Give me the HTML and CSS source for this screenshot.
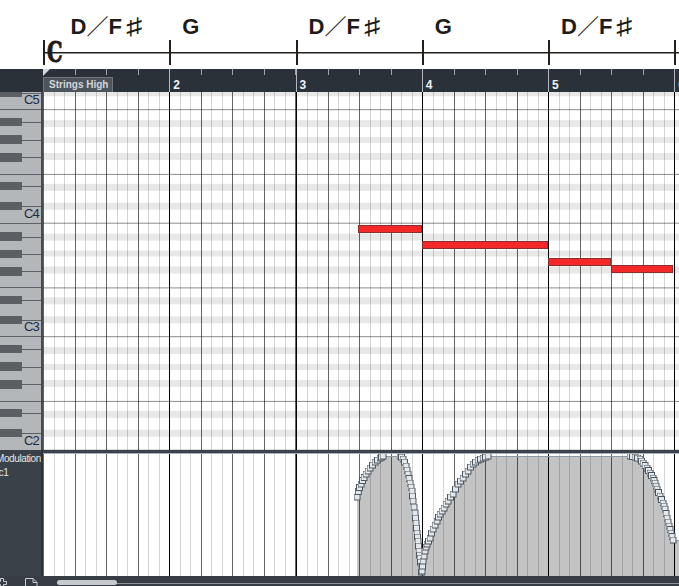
FILE: index.html
```html
<!DOCTYPE html>
<html>
<head>
<meta charset="utf-8">
<title>Key Editor</title>
<link rel="stylesheet" href="styles.css">
</head>
<body>
<div class="app">
  <div class="score">
    <div class="measure first">
      <div class="chord">D<span class="thin">／</span>F<span class="sharp">♯</span></div>
      <div class="staff"><span class="clef">C</span></div>
    </div>
    <div class="measure">
      <div class="chord">G</div>
      <div class="staff"></div>
    </div>
    <div class="measure">
      <div class="chord">D<span class="thin">／</span>F<span class="sharp">♯</span></div>
      <div class="staff"></div>
    </div>
    <div class="measure">
      <div class="chord">G</div>
      <div class="staff"></div>
    </div>
    <div class="measure">
      <div class="chord">D<span class="thin">／</span>F<span class="sharp">♯</span></div>
      <div class="staff"></div>
    </div>
    <div class="measure">
      <div class="chord"></div>
      <div class="staff"></div>
    </div>
  </div>

  <div class="ruler">
    <div class="ruler-corner"></div>
    <div class="ruler-track">
      <div class="rbar"><span class="part">Strings High</span></div>
      <div class="rbar"><span class="num">2</span></div>
      <div class="rbar"><span class="num">3</span></div>
      <div class="rbar"><span class="num">4</span></div>
      <div class="rbar"><span class="num">5</span></div>
      <div class="rbar"><span class="num">6</span></div>
    </div>
  </div>

  <div class="editor">
    <div class="piano">
      <div class="octave"><span class="clabel">C5</span></div>
      <div class="octave"><span class="clabel">C4</span></div>
      <div class="octave"><span class="clabel">C3</span></div>
      <div class="octave"><span class="clabel">C2</span></div>
    </div>
    <div class="grid">
      <div class="bars">
        <div class="bar"></div><div class="bar"></div><div class="bar"></div>
        <div class="bar"></div><div class="bar"></div><div class="bar"></div>
      </div>
      <div class="note" style="left:314.5px;top:133px;width:64px"></div>
      <div class="note" style="left:378.5px;top:149px;width:126.5px"></div>
      <div class="note" style="left:505px;top:166px;width:62.5px"></div>
      <div class="note" style="left:568px;top:173px;width:62px"></div>
    </div>
  </div>

  <div class="lane">
    <div class="lane-head">
      <div class="lane-name">Modulation</div>
      <div class="lane-cc">cc1</div>
    </div>
    <div class="lane-body">
      <div class="lane-sep"></div>
      <div class="lane-plot">
        <svg class="plot-fill" width="636" height="122" viewBox="43 453 636 122">
          <polygon fill="#c3c3c3" points="357,575 357,496 358.3,490.5 359.5,486.5 361,483 362.5,479.5 364,476.5 366,473 368,470 370,467 372.5,464 375,461 377.5,459 380,457 381.5,456 383,455 400,455 401.5,456 403,458 404.5,461 406,465 407,469 408,473 409,477.5 410,482 411,486 412,490 412.5,495 413,500 414,506 415,512 415.5,517 416,522 416.5,527 417,532 417.5,536 418,540 418.5,545 419,550 419.5,554 420,557 420.5,561 421,565 421,568 421.5,571 422,570 422.5,565 423,560 424,555 425,550 426,546 427,543 428.5,540 430,537 431.5,532 433,528 435,524 437,520 438.5,516 440,513 442,510 444,507 446,503 448,500 450.5,496 453,493 455.5,488 458,483 460.5,480 463,477 465.5,473 468,470 470.5,466 473,463 475.5,461 478,459 480.5,458 483,457 485.5,456 488,455 630,455 632.5,455.5 635,456 637.5,457 640,458 641.5,460 643,462 645,464.5 647,467 648.5,469.5 650,472 651.5,474.5 653,477 654,479.5 655,482 656,485 657,488 658.5,491.5 660,495 661.5,498.5 663,502 664,505 665,508 666,512.5 667,517 668,521 669,525 670,528.5 671,532 672,535.5 673,539 679,539 679,575"/>
        </svg>
        <div class="bars">
          <div class="bar"></div><div class="bar"></div><div class="bar"></div>
          <div class="bar"></div><div class="bar"></div><div class="bar"></div>
        </div>
        <svg class="plot-curve" width="636" height="122" viewBox="43 453 636 122">
          <defs>
            <marker id="pt" markerWidth="7" markerHeight="7" refX="3.5" refY="3.5" markerUnits="userSpaceOnUse">
              <rect x="0.5" y="0.5" width="6" height="6" fill="#e4e8eb" stroke="#4c5761" stroke-width="1"/>
            </marker>
          </defs>
          <path class="flat" d="M383 455.5H400M488 455.5H630M673 539.5H679"/>
          <polyline class="curve" points="357,496 358.3,490.5 359.5,486.5 361,483 362.5,479.5 364,476.5 366,473 368,470 370,467 372.5,464 375,461 377.5,459 380,457 381.5,456 383,455"/>
          <polyline class="curve" points="400,455 401.5,456 403,458 404.5,461 406,465 407,469 408,473 409,477.5 410,482 411,486 412,490 412.5,495 413,500 414,506 415,512 415.5,517 416,522 416.5,527 417,532 417.5,536 418,540 418.5,545 419,550 419.5,554 420,557 420.5,561 421,565 421,568 421.5,571 422,570 422.5,565 423,560 424,555 425,550 426,546 427,543 428.5,540 430,537 431.5,532 433,528 435,524 437,520 438.5,516 440,513 442,510 444,507 446,503 448,500 450.5,496 453,493 455.5,488 458,483 460.5,480 463,477 465.5,473 468,470 470.5,466 473,463 475.5,461 478,459 480.5,458 483,457 485.5,456 488,455"/>
          <polyline class="curve" points="630,455 632.5,455.5 635,456 637.5,457 640,458 641.5,460 643,462 645,464.5 647,467 648.5,469.5 650,472 651.5,474.5 653,477 654,479.5 655,482 656,485 657,488 658.5,491.5 660,495 661.5,498.5 663,502 664,505 665,508 666,512.5 667,517 668,521 669,525 670,528.5 671,532 672,535.5 673,539"/>
        </svg>
      </div>
    </div>
  </div>

  <div class="footer">
    <svg class="ico-add" width="10" height="10" viewBox="0 0 10 10"><path d="M3.5 0.5h3v3h3v3h-3v3h-3v-3h-3v-3h3z" fill="none" stroke="#c8ccd0"/></svg>
    <svg class="ico-doc" width="13" height="10" viewBox="0 0 13 10"><path d="M0.5 0.5h7.5l4 4v6M0.5 0.5v10M8 0.5v4h4" fill="none" stroke="#c8ccd0"/></svg>
    <div class="scroll"><div class="thumb"></div></div>
  </div>
</div>
</body>
</html>
```

FILE: styles.css
```css
* { box-sizing: border-box; }
html, body { margin: 0; padding: 0; background: #fff; }

.app {
  width: 679px;
  height: 586px;
  overflow: hidden;
  display: flex;
  flex-direction: column;
  font-family: "Liberation Sans", Arial, sans-serif;
}

/* ---------- score strip ---------- */
.score {
  flex: 0 0 69px;
  display: flex;
  padding-left: 43px;
  overflow: hidden;
  background: #fff;
}
.measure {
  flex: 0 0 126.25px;
  display: flex;
  flex-direction: column;
}
.chord {
  height: 40px;
  padding: 16.4px 0 0 13px;
  font: 700 22px/22px "Liberation Sans", "Noto Sans CJK JP", sans-serif;
  color: #1f1b18;
  white-space: nowrap;
}
.measure.first .chord { padding-left: 27.5px; }
.thin { font-weight: 400; }
.sharp {
  display: inline-block;
  margin-left: 4px;
  font-size: 23px;
  font-weight: 700;
  line-height: 0;
  transform: scaleX(1.4);
  transform-origin: 0 0;
}
.staff {
  height: 25px;
  border-left: 2px solid #231f1c;
  background: linear-gradient(#231f1c, #231f1c) 0 11.5px / 100% 1.5px no-repeat;
}
.clef {
  display: block;
  width: 24px;
  margin: -1px 0 0 2px;
  font: 700 27px/27px "DejaVu Serif", "Liberation Serif", serif;
  color: #1f1b18;
  -webkit-text-stroke: 1px #1f1b18;
  transform: scaleX(0.72);
  transform-origin: 0 0;
}

/* ---------- ruler ---------- */
.ruler {
  flex: 0 0 23px;
  display: flex;
  background: #2b3139;
}
.ruler-corner { flex: 0 0 43px; }
.ruler-track {
  flex: 1;
  display: flex;
  overflow: hidden;
}
.rbar {
  flex: 0 0 126.25px;
  position: relative;
  display: flex;
  align-items: flex-end;
  border-left: 1px solid #b2b8be;
  background: repeating-linear-gradient(to right, #9aa1a8 0 1px, transparent 1px 31.5625px) 0 0 / 100% 6px no-repeat;
  background-origin: border-box;
}
.rbar:first-child { border-left: 0; }
.rbar:first-child::before {
  content: "";
  position: absolute;
  left: 0;
  top: 0;
  border-top: 7px solid #d5d9dc;
  border-right: 7px solid transparent;
}
.num {
  padding: 0 0 1.2px 3px;
  font: 700 12px/12px "Liberation Sans", sans-serif;
  color: #eef3f8;
}
.part {
  width: 70px;
  height: 15px;
  padding-left: 5px;
  background: #4e545b;
  border: 1px solid #6e747a;
  border-bottom: 0;
  font: 700 10px/14px "Liberation Sans", sans-serif;
  color: #d2d6da;
  white-space: nowrap;
}

/* ---------- key editor ---------- */
.editor {
  flex: 0 0 357px;
  display: flex;
}
.piano {
  flex: 0 0 43px;
  border-right: 2px solid #464b50;
  background: #b4b7ba;
  overflow: hidden;
}
.octave {
  height: 113.5px;
  display: flex;
  justify-content: flex-end;
  align-items: flex-end;
  padding: 0 2px 2.9px 0;
  background:
    linear-gradient(#5d6165, #5d6165) 0 0 / 100% 1px no-repeat,
    linear-gradient(#5d6165, #5d6165) 0 64.5px / 100% 1px no-repeat,
    linear-gradient(to bottom, transparent 13.5px, #5d6165 13.5px 14.5px, transparent 14.5px 31px, #5d6165 31px 32px, transparent 32px 48.5px, #5d6165 48.5px 49.5px, transparent 49.5px 77px, #5d6165 77px 78px, transparent 78px 97px, #5d6165 97px 98px, transparent 98px) 22px 0 / 19px 100% no-repeat,
    linear-gradient(to bottom, transparent 9px, #5b5f63 9px 17.5px, transparent 17.5px 26.5px, #5b5f63 26.5px 35px, transparent 35px 44.5px, #5b5f63 44.5px 53px, transparent 53px 73px, #5b5f63 73px 81.5px, transparent 81.5px 93px, #5b5f63 93px 101.5px, transparent 101.5px) 0 0 / 22px 100% no-repeat;
}
.octave:first-child { margin-top: -96.3px; }
.clabel {
  font: 13px/12px "Liberation Sans", sans-serif;
  letter-spacing: -0.8px;
  color: #1d2a42;
}

.grid {
  flex: 1;
  position: relative;
  overflow: hidden;
  background:
    linear-gradient(to bottom, #8b8b8b 0 1px, transparent 1px 64.5px, #8b8b8b 64.5px 65.5px, transparent 65.5px) 0 17.2px / 100% 113.5px,
    linear-gradient(to bottom, transparent 10.5px, #e8e8e8 10.5px 17.5px, transparent 17.5px 27.5px, #e8e8e8 27.5px 34px, transparent 34px 44px, #e8e8e8 44px 50.5px, transparent 50.5px 75px, #e8e8e8 75px 81.5px, transparent 81.5px 93.5px, #e8e8e8 93.5px 100.5px, transparent 100.5px) 0 17.2px / 100% 113.5px,
    #fff;
}
.bars {
  display: flex;
  height: 100%;
}
.bar {
  flex: 0 0 126.25px;
  border-left: 1px solid #000;
  background-image:
    repeating-linear-gradient(to right, rgba(0,0,0,0.52) 0 1px, transparent 1px 31.5625px),
    repeating-linear-gradient(to right, rgba(0,0,0,0.17) 0 1px, transparent 1px 10.5208px);
  background-origin: border-box;
}
.bar:first-child { border-left: 0; }
.note {
  position: absolute;
  height: 8px;
  background: #f42828;
  border: 1px solid #8e2d2d;
}

/* ---------- controller lane ---------- */
.lane {
  flex: 0 0 126px;
  display: flex;
}
.lane-head {
  flex: 0 0 43px;
  border-right: 2px solid #2c3137;
  background: #3a4149;
  overflow: hidden;
  padding-top: 3px;
  color: #e2e6ea;
  font: 10px/11px "Liberation Sans", sans-serif;
  letter-spacing: -0.4px;
  white-space: nowrap;
}
.lane-name { margin-left: -4px; }
.lane-cc { margin: 3px 0 0 -6px; }
.lane-body {
  flex: 1;
  display: flex;
  flex-direction: column;
}
.lane-sep {
  flex: 0 0 4px;
  background: linear-gradient(#3b424a 0 3px, #a2b2be 3px);
}
.lane-plot {
  flex: 1;
  position: relative;
  background: #fff;
  overflow: hidden;
}
.plot-fill, .plot-curve {
  position: absolute;
  left: 0;
  top: 0;
}
.lane-plot .bars { position: relative; }
.flat {
  fill: none;
  stroke: #8c99a4;
  stroke-width: 1.2;
}
.curve {
  fill: none;
  stroke: #4f5a64;
  stroke-width: 2;
  marker-start: url(#pt);
  marker-mid: url(#pt);
  marker-end: url(#pt);
}

/* ---------- footer ---------- */
.footer {
  flex: 0 0 11px;
  display: flex;
  align-items: flex-start;
  background: #373d44;
  overflow: hidden;
}
.ico-add { flex: 0 0 10px; margin: 2px 0 0 -3px; }
.ico-doc { flex: 0 0 13px; margin: 2px 0 0 18px; }
.scroll {
  flex: 1;
  height: 100%;
  margin-left: 19px;
  background: linear-gradient(#8e949a, #8e949a) 0 7px / 100% 1px no-repeat;
}
.thumb {
  width: 60px;
  height: 5px;
  margin-top: 4.5px;
  border-radius: 3px;
  background: #c6cacd;
}
```
